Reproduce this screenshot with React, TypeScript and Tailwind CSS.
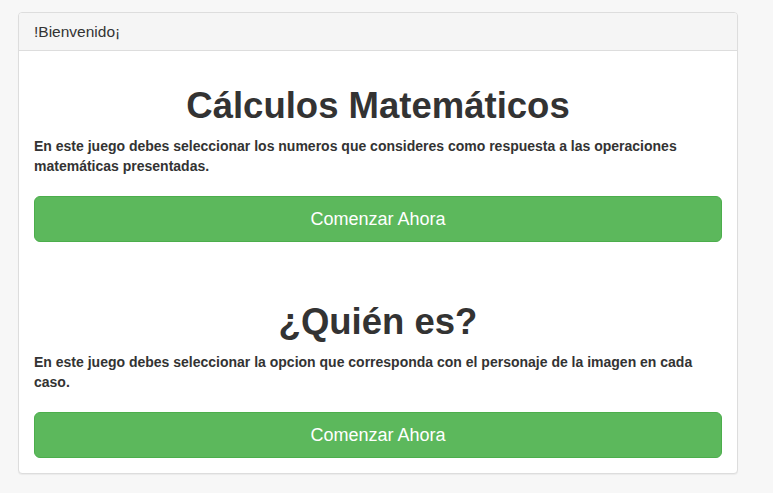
export default function App() {
  return (
    <div className="min-h-[493px] bg-[#f7f7f7] pt-[12px] pl-[18px] text-[#333]" style={{ fontFamily: '"Liberation Sans", Arial, sans-serif' }}>
      <div className="w-[720px] rounded-[4px] border border-[#ddd] bg-white shadow-[0_1px_1px_rgba(0,0,0,0.05)]">
        <div className="h-[38px] rounded-t-[3px] border-b border-[#ddd] bg-[#f5f5f5] px-[15px] text-[15.5px] leading-[37px]">
          !Bienvenido¡
        </div>
        <div className="px-[15px] py-[15px]">
          <h1 className="mt-[20px] mb-[10px] text-center text-[36.5px] font-bold leading-[40px]">Cálculos Matemáticos</h1>
          <p className="mb-[20px] text-[14px] font-bold leading-[20px]">
            En este juego debes seleccionar los numeros que consideres como respuesta a las operaciones matemáticas presentadas.
          </p>
          <button className="block h-[46px] w-full rounded-[6px] border border-[#4cae4c] bg-[#5cb85c] text-[18px] text-white">
            Comenzar Ahora
          </button>
          <div className="h-[40px]" />
          <h1 className="mt-[20px] mb-[10px] text-center text-[36.5px] font-bold leading-[40px]">¿Quién es?</h1>
          <p className="mb-[20px] text-[14px] font-bold leading-[20px]">
            En este juego debes seleccionar la opcion que corresponda con el personaje de la imagen en cada caso.
          </p>
          <button className="block h-[46px] w-full rounded-[6px] border border-[#4cae4c] bg-[#5cb85c] text-[18px] text-white">
            Comenzar Ahora
          </button>
        </div>
      </div>
    </div>
  );
}
